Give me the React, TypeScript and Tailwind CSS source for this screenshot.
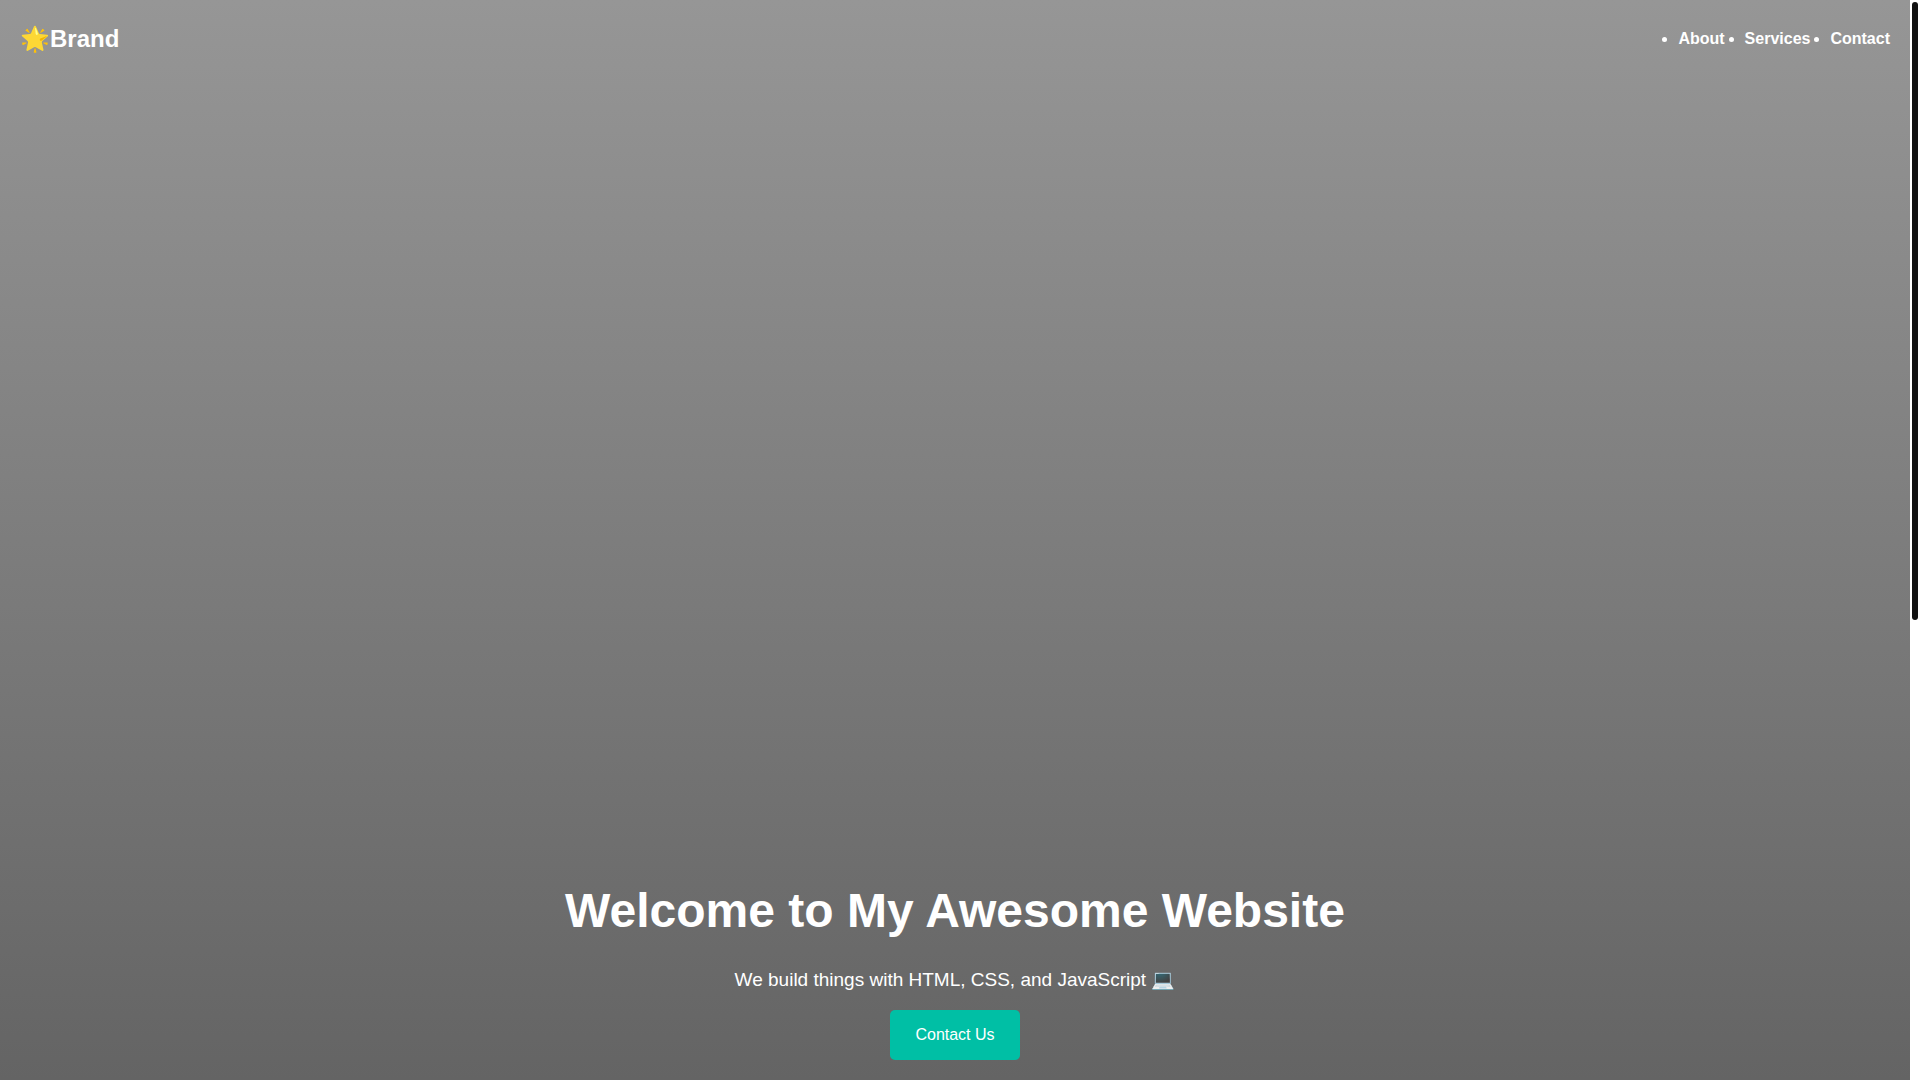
const links = ["About", "Services", "Contact"];

export default function App() {
  return (
    <div className="flex h-screen bg-white font-['Liberation_Sans',Arial,sans-serif] text-white">
      <div className="flex min-w-0 flex-1 flex-col justify-between bg-linear-to-b/srgb from-[#969696] to-[#646464] p-5">
        <nav className="flex items-center justify-between py-[3px]">
          <a href="#" className="text-2xl font-bold">🌟Brand</a>
          <ul className="flex list-disc">
            {links.map((label) => (
              <li key={label} className="ml-5">
                <a href="#" className="font-bold">{label}</a>
              </li>
            ))}
          </ul>
        </nav>
        <header className="flex flex-col items-center text-center">
          <h1 className="mb-[34px] text-5xl font-bold">Welcome to My Awesome Website</h1>
          <p className="mb-[19px] text-[19px] leading-[22px]">We build things with HTML, CSS, and JavaScript 💻</p>
          <button className="rounded-[5px] bg-[#00bfa5] px-[25px] py-[13px] text-base">Contact Us</button>
        </header>
      </div>
      <div className="w-[10px] p-[2px]">
        <div className="h-[618px] rounded-[3px] bg-[#111111]" />
      </div>
    </div>
  );
}
